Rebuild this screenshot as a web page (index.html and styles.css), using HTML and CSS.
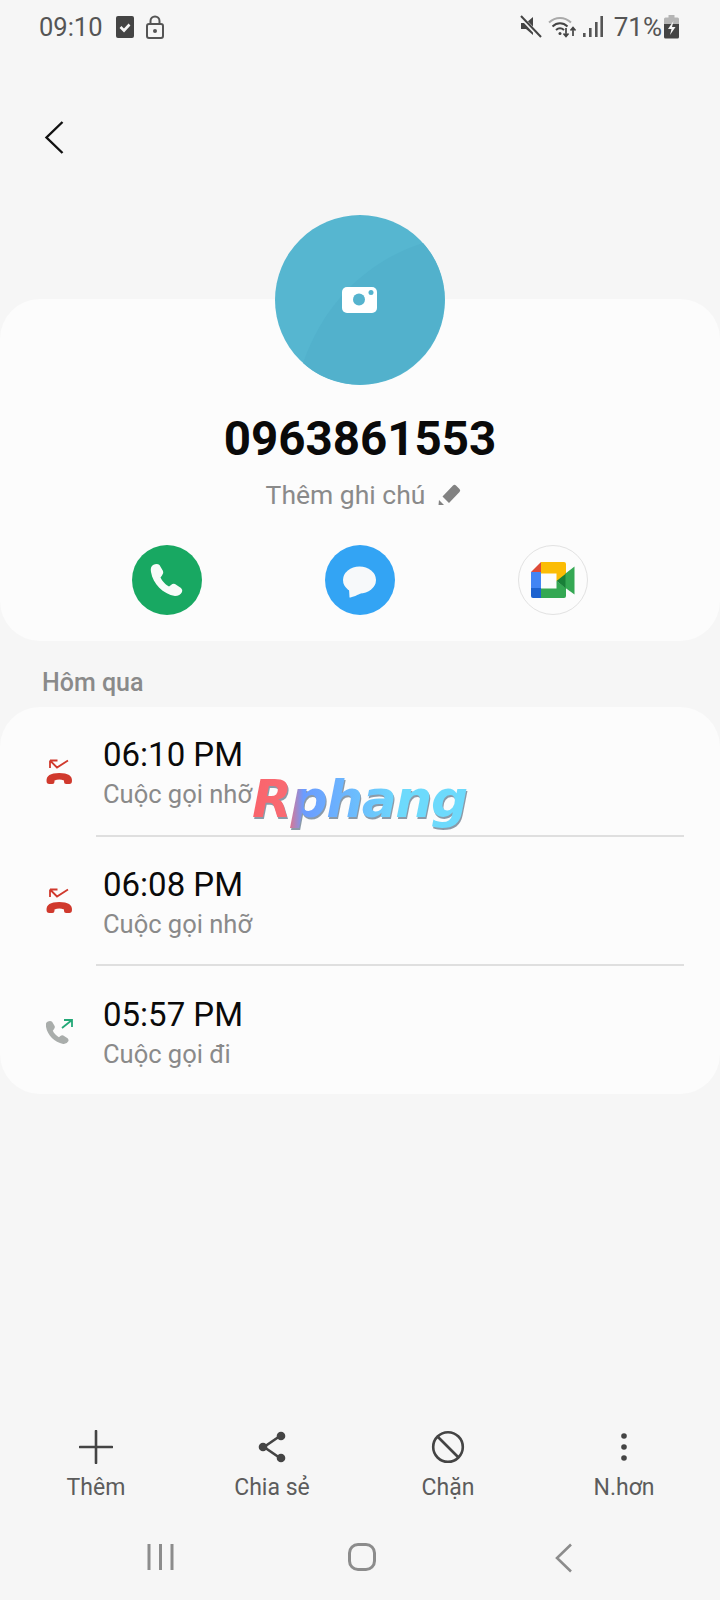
FILE: index.html
```html
<!DOCTYPE html>
<html lang="vi">
<head>
    <meta charset="UTF-8">
    <meta name="viewport" content="width=device-width, initial-scale=1.0">
    <title>0963861553</title>
    <link rel="stylesheet" href="styles.css">
</head>
<body>
    <div class="screen">
        <div class="status-bar">
            <div class="status-left">
                <span class="time">09:10</span>
                <svg class="st-check" width="18" height="22" viewBox="0 0 18 22"><rect width="18" height="22" rx="2" fill="#444"/><path d="M4.500 11l3.500 3.500L13.500 8.500" fill="none" stroke="#f6f6f6" stroke-width="2.600"/></svg>
                <svg class="st-lock" width="18" height="24" viewBox="0 0 18 24"><rect x="1" y="9" width="16" height="14" rx="2" fill="none" stroke="#555" stroke-width="2"/><path d="M4.500 9V6a4.500 4.500 0 0 1 9 0v3" fill="none" stroke="#555" stroke-width="2"/><circle cx="9" cy="16" r="2" fill="#555"/></svg>
            </div>
            <div class="status-right">
                <svg width="22" height="24" viewBox="0 0 22 24"><path d="M1 8h5l7-6v18l-7-6H1z" fill="#444"/><path d="M1 2l19 20" stroke="#f6f6f6" stroke-width="4"/><path d="M1 1l20 21" stroke="#444" stroke-width="2"/></svg>
                <svg class="st-wifi" width="30" height="24" viewBox="0 0 30 24"><path d="M1 7.500c6.500-6 15.500-6 22 0" fill="none" stroke="#aaa" stroke-width="2"/><path d="M4.500 11.500c4.500-4.200 10.500-4.200 15 0" fill="none" stroke="#444" stroke-width="2"/><path d="M8 15c2.500-2.200 5.500-2.200 8 0" fill="none" stroke="#444" stroke-width="2"/><circle cx="12" cy="18.500" r="1.500" fill="#444"/><path d="M18 13v8M15.500 18.500l2.500 3 2.500-3M25 21v-8M22.500 15.500l2.500-3 2.500 3" fill="none" stroke="#444" stroke-width="1.700"/></svg>
                <svg class="st-signal" width="20" height="22" viewBox="0 0 20 22"><rect x="0" y="17" width="2.600" height="4" fill="#555"/><rect x="6" y="12" width="2.600" height="9" fill="#555"/><rect x="12" y="6" width="2.600" height="15" fill="#555"/><rect x="17.400" y="0" width="2.600" height="21" fill="#555"/></svg>
                <span class="battery-text">71%</span>
                <svg class="st-batt" width="15" height="24" viewBox="0 0 15 24"><path d="M4.500 0h6v2.500h3a1.500 1.500 0 0 1 1.500 1.500v7H0V4a1.500 1.500 0 0 1 1.500-1.500h3z" fill="#b5b5b5"/><path d="M0 9h15v13a1.500 1.500 0 0 1-1.500 1.500h-12A1.500 1.500 0 0 1 0 22z" fill="#444"/><path d="M9.500 6L4 14h3.500L6 20l5.500-8H8z" fill="#f6f6f6"/></svg>
            </div>
        </div>

        <div class="toolbar">
            <svg width="22" height="36" viewBox="0 0 22 36"><path d="M18.500 2L2.500 17.500l16 15.500" fill="none" stroke="#111" stroke-width="2.400"/></svg>
        </div>

        <svg class="avatar" width="170" height="170" viewBox="0 0 170 170">
            <circle cx="85" cy="85" r="85" fill="#56b6d0"/>
            <path d="M28 148C50 85 95 45 148 28A85 85 0 0 1 28 148z" fill="#52b1cc"/>
            <rect x="67" y="72" width="35" height="26" rx="5" fill="#fff"/>
            <circle cx="84" cy="84.500" r="6" fill="#55b3ce"/>
            <circle cx="96" cy="77.500" r="2.500" fill="#55b3ce"/>
        </svg>

        <div class="card profile-card">
            <div class="number">0963861553</div>
            <div class="note">
                <span>Thêm ghi chú</span>
                <svg width="24" height="24" viewBox="0 0 24 24"><path d="M5.500 14.500L16 3.500Q17.500 2 19 3.500L22.500 7Q24 8.500 22.500 10L12 21z" fill="#828282"/><path d="M2 18L7 23H1.500z" fill="#828282"/></svg>
            </div>
            <div class="action-row">
                <div class="action-cell">
                    <svg width="70" height="70" viewBox="0 0 70 70">
                        <circle cx="35" cy="35" r="35" fill="#18a862"/>
                        <path d="M21 20Q18 22 19 27C21 39 31 49 43 51Q48 51 50 47Q51 45 49 43L43 39Q41 38 39 40L37 41.500C34 40 30 36 28.500 32.500L30 30.500Q32 28 31 26L27.500 20Q25 18 21 20z" fill="#f8fbf9"/>
                    </svg>
                </div>
                <div class="action-cell">
                    <svg width="70" height="70" viewBox="0 0 70 70">
                        <circle cx="35" cy="35" r="35" fill="#33a4f4"/>
                        <ellipse cx="34.500" cy="35" rx="16.500" ry="13.500" fill="#f7f9fa"/>
                        <path d="M24 44L24.500 52.500C27 52.500 33 50 38 47z" fill="#f7f9fa"/>
                    </svg>
                </div>
                <div class="action-cell">
                    <div class="meet-btn">
                        <svg width="44" height="36" viewBox="0 0 44 36">
                            <path d="M10 0L0 10h10z" fill="#dd4b38"/>
                            <rect y="10" width="10" height="16" fill="#4285f4"/>
                            <path d="M0 26h10v10H2a2 2 0 0 1-2-2z" fill="#1c62cf"/>
                            <path d="M10 0h23a2 2 0 0 1 2 2v10L34 19 25.500 19V11.500H10z" fill="#fbbc05"/>
                            <path d="M10 26.500h15.500V19L35 26v8a2 2 0 0 1-2 2H10z" fill="#34a853"/>
                            <path d="M25.500 19L35 11.500V26.500z" fill="#188038"/>
                            <path d="M34.500 11.500L43.500 4.500V32.500L34.500 26z" fill="#34a853"/>
                        </svg>
                    </div>
                </div>
            </div>
        </div>

        <div class="section-label">Hôm qua</div>

        <div class="card call-card">
            <div class="call-row">
                <div class="call-icon">
                    <svg width="28" height="26" viewBox="0 0 28 26"><path d="M22 1.500L11 8.500L4.500 2M4 1.500h7.500M4 1.500V9" fill="none" stroke="#d0392d" stroke-width="1.800"/><path transform="scale(1.060 1)" d="M.5 22Q0 14 12.500 14Q25 14 24.500 22Q24.500 25 22 25H19Q17 25 17 23V21.500Q12.500 19.500 8 21.500V23Q8 25 6 25H3Q.5 25 .5 22z" fill="#d0392d"/></svg>
                </div>
                <div class="call-text">
                    <div class="call-time">06:10 PM</div>
                    <div class="call-type">Cuộc gọi nhỡ</div>
                </div>
            </div>
            <div class="call-row">
                <div class="call-icon">
                    <svg width="28" height="26" viewBox="0 0 28 26"><path d="M22 1.500L11 8.500L4.500 2M4 1.500h7.500M4 1.500V9" fill="none" stroke="#d0392d" stroke-width="1.800"/><path transform="scale(1.060 1)" d="M.5 22Q0 14 12.500 14Q25 14 24.500 22Q24.500 25 22 25H19Q17 25 17 23V21.500Q12.500 19.500 8 21.500V23Q8 25 6 25H3Q.5 25 .5 22z" fill="#d0392d"/></svg>
                </div>
                <div class="call-text">
                    <div class="call-time">06:08 PM</div>
                    <div class="call-type">Cuộc gọi nhỡ</div>
                </div>
            </div>
            <div class="call-row">
                <div class="call-icon">
                    <svg width="28" height="26" viewBox="0 0 28 26"><path transform="translate(-13.700 -10.700) scale(.72)" d="M21 20Q18 22 19 27C21 39 31 49 43 51Q48 51 50 47Q51 45 49 43L43 39Q41 38 39 40L37 41.500C34 40 30 36 28.500 32.500L30 30.500Q32 28 31 26L27.500 20Q25 18 21 20z" fill="#a9adab"/><path d="M16 10l10-8M18 2h8v7" fill="none" stroke="#23a877" stroke-width="1.800"/></svg>
                </div>
                <div class="call-text last">
                    <div class="call-time">05:57 PM</div>
                    <div class="call-type">Cuộc gọi đi</div>
                </div>
            </div>
            <div class="watermark">Rphang</div>
        </div>

        <div class="bottom-actions">
            <div class="bottom-item">
                <svg width="34" height="34" viewBox="0 0 34 34"><path d="M17 1v32M1 17h32" stroke="#444" stroke-width="2.600" stroke-linecap="round"/></svg>
                <span>Thêm</span>
            </div>
            <div class="bottom-item">
                <svg width="34" height="34" viewBox="0 0 34 34"><path d="M25 6L9 17l16 11" fill="none" stroke="#444" stroke-width="2.600"/><circle cx="26" cy="6" r="4.300" fill="#444"/><circle cx="8" cy="17" r="4.300" fill="#444"/><circle cx="26" cy="28" r="4.300" fill="#444"/></svg>
                <span>Chia sẻ</span>
            </div>
            <div class="bottom-item">
                <svg width="34" height="34" viewBox="0 0 34 34"><circle cx="17" cy="17" r="14.800" fill="none" stroke="#444" stroke-width="2.600"/><path d="M7 7l20 20" stroke="#444" stroke-width="2.600"/></svg>
                <span>Chặn</span>
            </div>
            <div class="bottom-item">
                <svg width="34" height="34" viewBox="0 0 34 34"><circle cx="17" cy="6" r="2.800" fill="#444"/><circle cx="17" cy="17" r="2.800" fill="#444"/><circle cx="17" cy="28" r="2.800" fill="#444"/></svg>
                <span>N.hơn</span>
            </div>
        </div>

        <div class="nav-bar">
            <div class="nav-cell">
                <svg width="27" height="28" viewBox="0 0 27 28"><path d="M2 1v26M13.500 1v26M25 1v26" stroke="#8c8c8c" stroke-width="3"/></svg>
            </div>
            <div class="nav-cell">
                <svg width="28" height="28" viewBox="0 0 28 28"><rect x="1.500" y="1.500" width="25" height="25" rx="8.500" fill="none" stroke="#8c8c8c" stroke-width="3"/></svg>
            </div>
            <div class="nav-cell">
                <svg width="18" height="30" viewBox="0 0 18 30"><path d="M16 1.500L2 15l14 13.500" fill="none" stroke="#8c8c8c" stroke-width="2.600"/></svg>
            </div>
        </div>
    </div>
</body>
</html>
```
FILE: styles.css
```css
* {
    margin: 0;
    padding: 0;
    box-sizing: border-box;
    font-family: Roboto, "Noto Sans", sans-serif;
}

body {
    width: 720px;
    height: 1600px;
    background-color: #f6f6f6;
    overflow: hidden;
}

svg {
    display: block;
    flex-shrink: 0;
}

.screen {
    width: 720px;
    height: 1600px;
    display: flex;
    flex-direction: column;
}

.status-bar {
    height: 50px;
    padding: 4px 41px 0 39px;
    display: flex;
    justify-content: space-between;
    align-items: center;
    color: #555;
}

.status-left,
.status-right {
    display: flex;
    align-items: center;
}

.time {
    font-size: 25.500px;
    margin-right: 13px;
}

.st-lock {
    margin-left: 12px;
}

.st-wifi {
    margin-left: 6px;
}

.st-signal {
    margin-left: 5px;
}

.battery-text {
    font-size: 26px;
    margin-left: 11px;
}

.st-batt {
    margin-left: 2px;
}

.toolbar {
    height: 124px;
    padding: 70px 0 0 44px;
}

.avatar {
    margin: 41px auto -86px;
    position: relative;
    z-index: 2;
}

.card {
    background-color: #fcfcfc;
    border-radius: 40px;
}

.profile-card {
    height: 342px;
    padding-top: 114px;
}

.number {
    text-align: center;
    font-size: 47.500px;
    font-weight: 700;
    line-height: 52px;
    color: #0a0a0a;
}

.note {
    display: flex;
    justify-content: center;
    align-items: center;
    gap: 12px;
    margin-top: 9px;
    padding-left: 7px;
    height: 40px;
    font-size: 26.500px;
    color: #8a8a8a;
}

.action-row {
    display: grid;
    grid-template-columns: repeat(3, 1fr);
    padding: 0 70px;
    margin-top: 31px;
}

.action-cell {
    display: flex;
    justify-content: center;
}

.meet-btn {
    width: 70px;
    height: 70px;
    border: 1px solid #e2e2e2;
    border-radius: 50%;
    display: flex;
    justify-content: center;
    align-items: center;
}

.section-label {
    height: 66px;
    padding: 27px 0 0 42px;
    font-size: 25px;
    font-weight: 500;
    line-height: 30px;
    color: #8a8a8a;
}

.call-card {
    height: 387px;
    position: relative;
}

.call-row {
    height: 129.500px;
    display: flex;
}

.call-icon {
    width: 96px;
    padding-left: 46px;
    display: flex;
    align-items: center;
}

.call-text {
    flex: 1;
    margin-right: 36px;
    padding: 27px 0 0 8px;
    border-bottom: 2px solid #dfdfdf;
}

.call-text.last {
    border-bottom: none;
    padding-top: 28px;
}

.call-time {
    font-size: 33px;
    line-height: 41px;
    margin-left: -1px;
    color: #0a0a0a;
}

.call-type {
    font-size: 25.500px;
    line-height: 39px;
    margin-left: -1px;
    color: #8a8a8a;
}

.watermark {
    position: absolute;
    left: 252px;
    top: 60px;
    font-family: "DejaVu Sans", sans-serif;
    font-size: 52px;
    font-style: italic;
    font-weight: 700;
    line-height: 64px;
    letter-spacing: -1.500px;
    background: linear-gradient(to right, #f9646c 0%, #f96a72 16%, #6a9cff 24%, #6ddafc 70%, #6ddafc 100%);
    -webkit-background-clip: text;
    background-clip: text;
    color: transparent;
    filter: drop-shadow(1px 2px 0 #8b9aa8);
}

.bottom-actions {
    margin-top: auto;
    display: grid;
    grid-template-columns: repeat(4, 1fr);
    padding: 0 8px;
}

.bottom-item {
    display: flex;
    flex-direction: column;
    align-items: center;
    gap: 8px;
    font-size: 23px;
    line-height: 32px;
    color: #5c5c5c;
}

.nav-bar {
    height: 96px;
    padding: 39px 55px 0 59px;
    display: grid;
    grid-template-columns: repeat(3, 1fr);
}

.nav-cell {
    display: flex;
    justify-content: center;
}
```
